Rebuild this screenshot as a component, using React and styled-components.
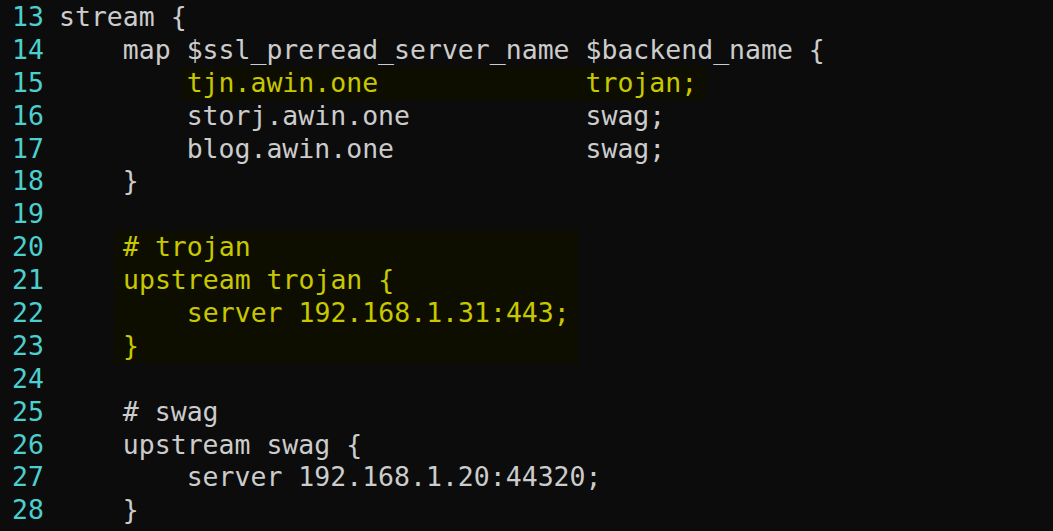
import React from "react";
import styled, { createGlobalStyle } from "styled-components";

const Global = createGlobalStyle`
  html, body { margin: 0; padding: 0; background: #0c0c0c; }
  body { overflow: hidden; }
`;

const Screen = styled.div`
  width: 1053px;
  height: 531px;
  background: #0c0c0c;
  display: grid;
  grid-template-columns: 32px 1fr;
  column-gap: 15px;
  padding: 1px 0 0 12px;
  box-sizing: border-box;
  font-family: "DejaVu Sans Mono", "Liberation Mono", monospace;
  font-size: 26.5px;
  line-height: 32.9px;
  white-space: pre;
  overflow: hidden;
`;

const Gutter = styled.div`
  display: flex;
  flex-direction: column;
  color: #4ccfcf;
`;

const Code = styled.div`
  display: flex;
  flex-direction: column;
  align-items: flex-start;
  color: #cccccc;
`;

const Line = styled.div`
  height: 32.9px;
`;

const Mark = styled.span`
  display: inline-block;
  background: #0e0e00;
  color: #c8c800;
  padding: 0 9px 0 5px;
  margin-left: -5px;
`;

const Block = styled.div`
  display: flex;
  flex-direction: column;
  background: #0e0e00;
  color: #c8c800;
  margin-left: 55px;
  padding: 0 8px 0 9px;
`;

const nums = Array.from({ length: 16 }, (_, i) => 13 + i);

export default function App() {
  return (
    <>
      <Global />
      <Screen>
        <Gutter>
          {nums.map((n) => (
            <Line key={n}>{n}</Line>
          ))}
        </Gutter>
        <Code>
          <Line>stream {"{"}</Line>
          <Line>{"    map $ssl_preread_server_name $backend_name {"}</Line>
          <Line>
            {"        "}
            <Mark>{"tjn.awin.one             trojan;"}</Mark>
          </Line>
          <Line>{"        storj.awin.one           swag;"}</Line>
          <Line>{"        blog.awin.one            swag;"}</Line>
          <Line>{"    }"}</Line>
          <Line> </Line>
          <Block>
            <Line>{"# trojan"}</Line>
            <Line>{"upstream trojan {"}</Line>
            <Line>{"    server 192.168.1.31:443;"}</Line>
            <Line>{"}"}</Line>
          </Block>
          <Line> </Line>
          <Line>{"    # swag"}</Line>
          <Line>{"    upstream swag {"}</Line>
          <Line>{"        server 192.168.1.20:44320;"}</Line>
          <Line>{"    }"}</Line>
        </Code>
      </Screen>
    </>
  );
}
